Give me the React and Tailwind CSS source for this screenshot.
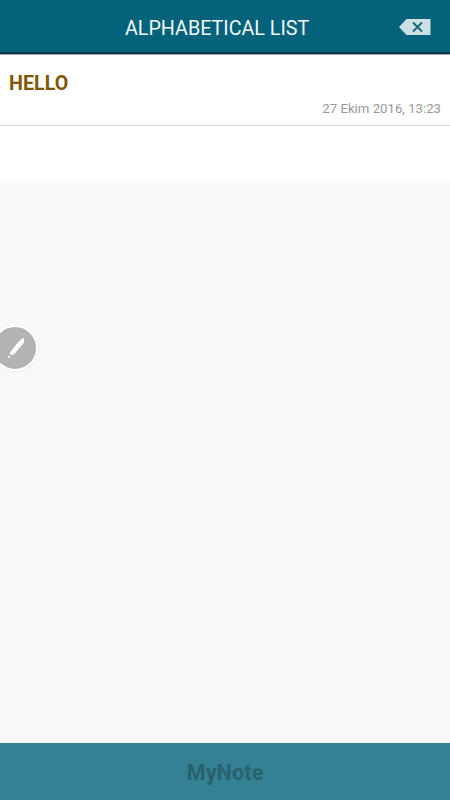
const fontStack = "font-['Roboto','Liberation_Sans',sans-serif]";

function BackspaceIcon() {
  return (
    <svg width="32" height="16" viewBox="0 0 32 16" aria-hidden="true">
      <path d="M0 8 7.5 0H31.5V16H7.5Z" fill="#cde0e4" />
      <path d="M14 3.5 23 12.5M23 3.5 14 12.5" stroke="#19697f" strokeWidth="2" fill="none" />
    </svg>
  );
}

function Header() {
  return (
    <header className="flex h-[55px] shrink-0 flex-col">
      <div className="flex h-[52px] items-center justify-between bg-[#04627b] pr-[19px] pl-[125px]">
        <h1 className="pt-[6px] text-[19.7px] leading-[24px] whitespace-nowrap text-[#f2f7f8]">
          ALPHABETICAL LIST
        </h1>
        <button className="mt-[2px]" aria-label="Delete">
          <BackspaceIcon />
        </button>
      </div>
      <div className="h-px bg-[#034052]" />
      <div className="h-px bg-[#102d38]" />
      <div className="h-px bg-[#a3a8b0]" />
    </header>
  );
}

function NoteRow({ title, date }) {
  return (
    <article className="flex h-[71px] flex-col border-b border-[#d9d9d9] bg-white px-[9px] pt-[17px]">
      <h2 className="text-[19.7px] leading-[24px] font-bold text-[#7d5800]">{title}</h2>
      <time className="mt-[5px] self-end text-[13.2px] leading-[16px] text-[#999999]">{date}</time>
    </article>
  );
}

function PenButton() {
  return (
    <button
      className="absolute top-[325px] left-[-8px] size-[46px] rounded-full border-2 border-white bg-[#b3b3b3] shadow-[0_1px_3px_rgba(0,0,0,0.06)]"
      aria-label="Write"
    >
      <svg className="absolute top-[9px] left-[12px]" width="20" height="24" viewBox="0 0 20 24" aria-hidden="true">
        <path d="M16.4 2.2 18 2.5V6.4L8.4 18 4.8 19.2 3.9 16.6 13.4 4.8Z" fill="white" />
        <circle cx="3" cy="21" r="1.1" fill="white" />
      </svg>
    </button>
  );
}

export default function App() {
  return (
    <div className={`relative flex h-[800px] w-[450px] flex-col overflow-hidden bg-[#f9f9f9] ${fontStack}`}>
      <Header />
      <main className="flex-1">
        <section className="h-[128px] bg-white">
          <NoteRow title="HELLO" date="27 Ekim 2016, 13:23" />
        </section>
      </main>
      <footer className="flex h-[57px] shrink-0 items-center justify-center bg-[#358194] pt-[4px] text-[21.8px] font-bold text-[#27626e]">
        MyNote
      </footer>
      <PenButton />
    </div>
  );
}
